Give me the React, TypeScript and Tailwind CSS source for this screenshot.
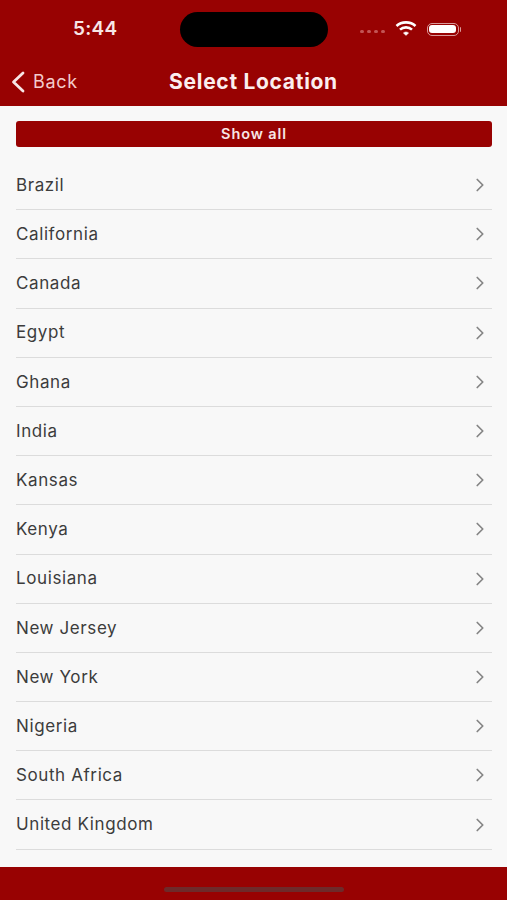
import React from 'react';
import { ChevronRight } from 'lucide-react';

const locations = [
  'Brazil',
  'California',
  'Canada',
  'Egypt',
  'Ghana',
  'India',
  'Kansas',
  'Kenya',
  'Louisiana',
  'New Jersey',
  'New York',
  'Nigeria',
  'South Africa',
  'United Kingdom',
];

const font = "font-['Inter',sans-serif]";

const WifiIcon = () => (
  <svg width="22" height="16" viewBox="0 0 22 16" fill="none" stroke="#fff" strokeLinecap="butt">
    <path d="M1.5 6 C6.5 1.2 15.5 1.2 20.5 6" strokeWidth="2.6" />
    <path d="M5 9.6 C8.2 6.6 13.8 6.6 17 9.6" strokeWidth="2.6" />
    <path d="M8.4 13 L11 15.4 L13.6 13 C12 11.6 10 11.6 8.4 13 Z" fill="#fff" strokeWidth="0.5" />
  </svg>
);

const BatteryIcon = () => (
  <div className="flex items-center">
    <div className="w-[32px] h-[13px] rounded-[5px] border border-[#d99a9a] p-[1.5px]">
      <div className="w-full h-full rounded-[3px] bg-white" />
    </div>
    <div className="w-[1.5px] h-[5px] bg-[#d99a9a] rounded-r-sm ml-[1px]" />
  </div>
);

const StatusBar = () => (
  <div className="relative h-[58px] flex items-start">
    <span className="ml-[73px] mt-[18px] text-[19px] leading-[22px] font-semibold text-[#f7e6e6] tracking-[0.3px]">5:44</span>
    <div className="absolute left-[180px] top-[12px] w-[148px] h-[35px] rounded-full bg-black" />
    <div className="ml-auto mr-[46px] mt-[20px] flex items-center">
      <div className="flex gap-[3px] mr-[10px] mt-[6px]">
        {[0, 1, 2, 3].map(i => (
          <span key={i} className="w-[4px] h-[3px] rounded-full bg-[#c25555]" />
        ))}
      </div>
      <WifiIcon />
      <div className="ml-[10px] mt-[2px]">
        <BatteryIcon />
      </div>
    </div>
  </div>
);

const NavBar = () => (
  <div className="relative h-[48px] flex items-center justify-center">
    <div className="absolute left-[10px] top-[12px] flex items-center text-[#f3cccc]">
      <svg width="16" height="24" viewBox="0 0 16 24" fill="none" stroke="#f7e6e6" strokeWidth="2.8" strokeLinecap="round" strokeLinejoin="round">
        <path d="M13 3 L3.5 12 L13 21" />
      </svg>
      <span className="ml-[7px] text-[18px] leading-[24px] tracking-[0.7px]">Back</span>
    </div>
    <span className="text-[21px] leading-[28px] font-bold text-[#fbeeee] tracking-[0.7px]">Select Location</span>
  </div>
);

export default function App() {
  return (
    <div className={`${font} w-[507px] h-[900px] flex flex-col bg-[#f8f8f8] overflow-hidden`}>
      <div className="bg-[#980202] h-[106px] shrink-0">
        <StatusBar />
        <NavBar />
      </div>

      <div className="flex-1 pl-4 pr-[15px] pt-[15px]">
        <button className="w-full h-[26px] pb-[1px] rounded-[3px] bg-[#980202] text-[#f7e6e6] text-[14.5px] font-semibold tracking-[0.9px] flex items-center justify-center">
          Show all
        </button>
        <div className="mt-[14px]">
          {locations.map(name => (
            <div key={name} className="h-[49.2px] flex items-center justify-between border-b-[1.5px] border-[#dcdcdc]">
              <span className="text-[17px] text-[#3c3c3c] tracking-[0.6px] mt-[1px]">{name}</span>
              <ChevronRight size={22} strokeWidth={1.9} className="text-[#858585] mr-[1px]" />
            </div>
          ))}
        </div>
      </div>

      <div className="bg-[#980202] h-[33px] shrink-0 flex justify-center">
        <div className="mt-[20px] w-[180px] h-[5px] rounded-full bg-[#6e2a2a]" />
      </div>
    </div>
  );
}
